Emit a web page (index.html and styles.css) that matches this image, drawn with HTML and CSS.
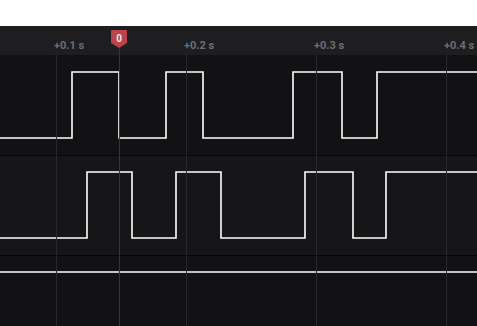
FILE: index.html
```html
<!DOCTYPE html>
<html lang="en">
<head>
  <meta charset="UTF-8" />
  <meta name="viewport" content="width=device-width, initial-scale=1.0" />
  <title>Logic Trace</title>
  <link rel="stylesheet" href="styles.css">
</head>
<body>
  <div class="top-space"></div>
  <div class="trace">
    <div class="ruler">
      <span class="tick">+0.1 s</span>
      <span class="tick">+0.2 s</span>
      <span class="tick">+0.3 s</span>
      <span class="tick last">+0.4 s</span>
    </div>
    <div class="channel ch1">
      <svg width="477" height="100"><polyline points="0,83 72,83 72,17 119,17 119,83 166,83 166,17 203,17 203,83 293,83 293,17 342,17 342,83 377,83 377,17 477,17" /></svg>
    </div>
    <div class="channel ch2">
      <svg width="477" height="99"><polyline points="0,82 87,82 87,16 132,16 132,82 176,82 176,16 221,16 221,82 305,82 305,16 353,16 353,82 386,82 386,16 477,16" /></svg>
    </div>
    <div class="channel ch3">
      <svg width="477" height="70"><polyline points="0,16 477,16" /></svg>
    </div>
    <svg class="grid" width="477" height="300">
      <line x1="56.5" y1="29" x2="56.5" y2="300" />
      <line x1="186.5" y1="29" x2="186.5" y2="300" />
      <line x1="316.5" y1="29" x2="316.5" y2="300" />
      <line x1="446.5" y1="29" x2="446.5" y2="300" />
      <line class="cursor" x1="119.5" y1="20" x2="119.5" y2="300" />
    </svg>
    <svg class="marker" width="18" height="20" viewBox="0 0 18 20">
      <path d="M2 1 H16 Q17 1 17 2 V14 L9 19 L1 14 V2 Q1 1 2 1 Z" />
      <text x="9" y="12.5">0</text>
    </svg>
  </div>
</body>
</html>
```

FILE: styles.css
```css
body { margin: 0; background: #fff; font-family: Roboto, "Liberation Sans", sans-serif; overflow: hidden; }
.top-space { height: 26px; }
.trace { position: relative; background: #121215; height: 300px; overflow: hidden; }
.ruler { height: 29px; background: #1e1e21; display: flex; padding-left: 54px; align-items: center; box-sizing: border-box; padding-top: 9px; overflow: hidden; }
.tick { width: 130px; flex: none; font-size: 11px; font-weight: bold; color: #6e6e74; }
.tick.last { width: auto; }
.channel { border-bottom: 1px solid #050506; }
.channel svg { display: block; }
.channel polyline { fill: none; stroke: #fff; stroke-width: 1.6; }
.ch1 { height: 100px; background: #121215; }
.ch2 { height: 99px; background: #161619; }
.ch3 { height: 70px; background: #121215; border-bottom: none; }
.grid { position: absolute; left: 0; top: 0; pointer-events: none; }
.grid line { stroke: #28282c; stroke-width: 1; }
.grid .cursor { stroke: #54283a; }
.marker { position: absolute; left: 110px; top: 3px; }
.marker path { fill: #b9444c; }
.marker text { fill: #f4e8e8; font-size: 10px; font-weight: bold; text-anchor: middle; font-family: Roboto, "Liberation Sans", sans-serif; }
```
